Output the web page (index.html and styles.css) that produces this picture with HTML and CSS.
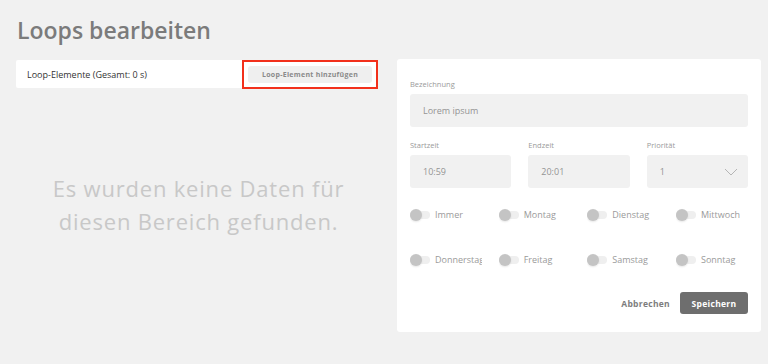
FILE: index.html
```html
<!DOCTYPE html>
<html lang="de">
<head>
    <meta charset="UTF-8">
    <meta name="viewport" content="width=device-width, initial-scale=1.0">
    <title>Loops bearbeiten</title>
    <link rel="stylesheet" href="styles.css">
</head>
<body>
    <h1>Loops bearbeiten</h1>

    <div class="layout">
        <section class="left">
            <div class="list-head">
                <span>Loop-Elemente (Gesamt: 0 s)</span>
                <div class="highlight">
                    <button class="add">Loop-Element hinzufügen</button>
                </div>
            </div>
            <div class="empty">
                <p>Es wurden keine Daten für<br>diesen Bereich gefunden.</p>
            </div>
        </section>

        <form class="panel">
            <label class="field full">
                <span>Bezeichnung</span>
                <div class="input">Lorem ipsum</div>
            </label>

            <div class="row">
                <label class="field">
                    <span>Startzeit</span>
                    <div class="input">10:59</div>
                </label>
                <label class="field">
                    <span>Endzeit</span>
                    <div class="input">20:01</div>
                </label>
                <label class="field">
                    <span>Priorität</span>
                    <div class="input select">
                        1
                        <svg width="14" height="8" viewBox="0 0 14 8"><path d="M1 1l6 6 6-6" fill="none" stroke="#b5b5b5" stroke-width="1"/></svg>
                    </div>
                </label>
            </div>

            <div class="days">
                <div class="day"><i></i><span>Immer</span></div>
                <div class="day"><i></i><span>Montag</span></div>
                <div class="day"><i></i><span>Dienstag</span></div>
                <div class="day"><i></i><span>Mittwoch</span></div>
                <div class="day"><i></i><span>Donnerstag</span></div>
                <div class="day"><i></i><span>Freitag</span></div>
                <div class="day"><i></i><span>Samstag</span></div>
                <div class="day"><i></i><span>Sonntag</span></div>
            </div>

            <div class="actions">
                <button type="button" class="cancel">Abbrechen</button>
                <button type="button" class="save">Speichern</button>
            </div>
        </form>
    </div>
</body>
</html>
```

FILE: styles.css
```css
body {
    font-family: "Open Sans", "DejaVu Sans", sans-serif;
    margin: 0;
    padding: 0 7px 0 16px;
    background-color: #f1f1f1;
    color: #555;
    height: 364px;
    box-sizing: border-box;
}

h1 {
    margin: 0;
    padding-top: 14px;
    height: 46px;
    box-sizing: border-box;
    font-size: 23px;
    font-weight: 600;
    color: #7b7b7b;
    line-height: 32px;
    padding-left: 1px;
}

.layout {
    display: grid;
    grid-template-columns: 361px 364px;
    gap: 20px;
}

.left {
    display: flex;
    flex-direction: column;
}

.list-head {
    margin-top: 14px;
    height: 28px;
    background: #fff;
    border-radius: 2px;
    display: flex;
    align-items: center;
    justify-content: space-between;
    padding-left: 11px;
    font-size: 9px;
    color: #333;

    .highlight {
        margin-right: -1px;
        border: 2px solid #f2301b;
        height: 29px;
        box-sizing: border-box;
        padding: 0 4px;
        display: flex;
        align-items: center;
    }

    .add {
        width: 124px;
        height: 17px;
        border: 0;
        border-radius: 3px;
        background: #efefef;
        color: #8a8a8a;
        font-family: inherit;
        font-size: 7px;
        font-weight: 700;
        letter-spacing: 0.3px;
        padding: 0;
    }
}

.empty {
    height: 228px;
    display: flex;
    align-items: center;
    justify-content: center;

    p {
        margin: 0;
        text-align: center;
        font-size: 22px;
        letter-spacing: 0.8px;
        line-height: 33px;
        color: #c8c8c8;
        padding: 6px 0 0 4px;
    }
}

.panel {
    margin-top: 13px;
    background: #fff;
    border-radius: 3px;
    height: 273px;
    box-sizing: border-box;
    padding: 20px 13px 0;
    display: flex;
    flex-direction: column;
}

.field {
    display: flex;
    flex-direction: column;

    span {
        font-size: 7.5px;
        color: #9a9a9a;
        height: 10px;
        line-height: 10px;
        margin-bottom: 5px;
    }
}

.input {
    height: 33px;
    background: #f1f1f1;
    border-radius: 3px;
    display: flex;
    align-items: center;
    justify-content: space-between;
    padding: 0 13px;
    font-size: 9px;
    color: #949494;

    &.select {
        padding-right: 10px;
    }
}

.row {
    margin-top: 13px;
    display: grid;
    grid-template-columns: repeat(3, 1fr);
    gap: 17px;
}

.days {
    margin-top: 17px;
    display: grid;
    grid-template-columns: repeat(4, 72px);
    justify-content: space-between;
    row-gap: 26px;
}

.day {
    display: flex;
    align-items: center;
    height: 19px;
    overflow: hidden;

    i {
        position: relative;
        width: 20px;
        height: 8px;
        border-radius: 4px;
        background: #efefef;
        margin-right: 5px;
        flex-shrink: 0;
    }

    i::before {
        content: "";
        position: absolute;
        left: 0;
        top: -2px;
        width: 12px;
        height: 12px;
        border-radius: 50%;
        background: #c4c4c4;
        box-shadow: 0 1px 2px rgba(0, 0, 0, 0.1);
    }

    span {
        font-size: 9px;
        color: #9a9a9a;
        white-space: nowrap;
    }
}

.actions {
    margin-top: 23px;
    display: flex;
    justify-content: flex-end;
    align-items: center;
    gap: 10px;

    button {
        border: 0;
        font-family: inherit;
        font-size: 8.5px;
        font-weight: 700;
        letter-spacing: 0.3px;
        cursor: pointer;
    }

    .cancel {
        background: none;
        color: #7d7d7d;
        padding: 0;
    }

    .save {
        width: 68px;
        height: 22px;
        background: #6e6e6e;
        color: #fff;
        border-radius: 3px;
    }
}
```
